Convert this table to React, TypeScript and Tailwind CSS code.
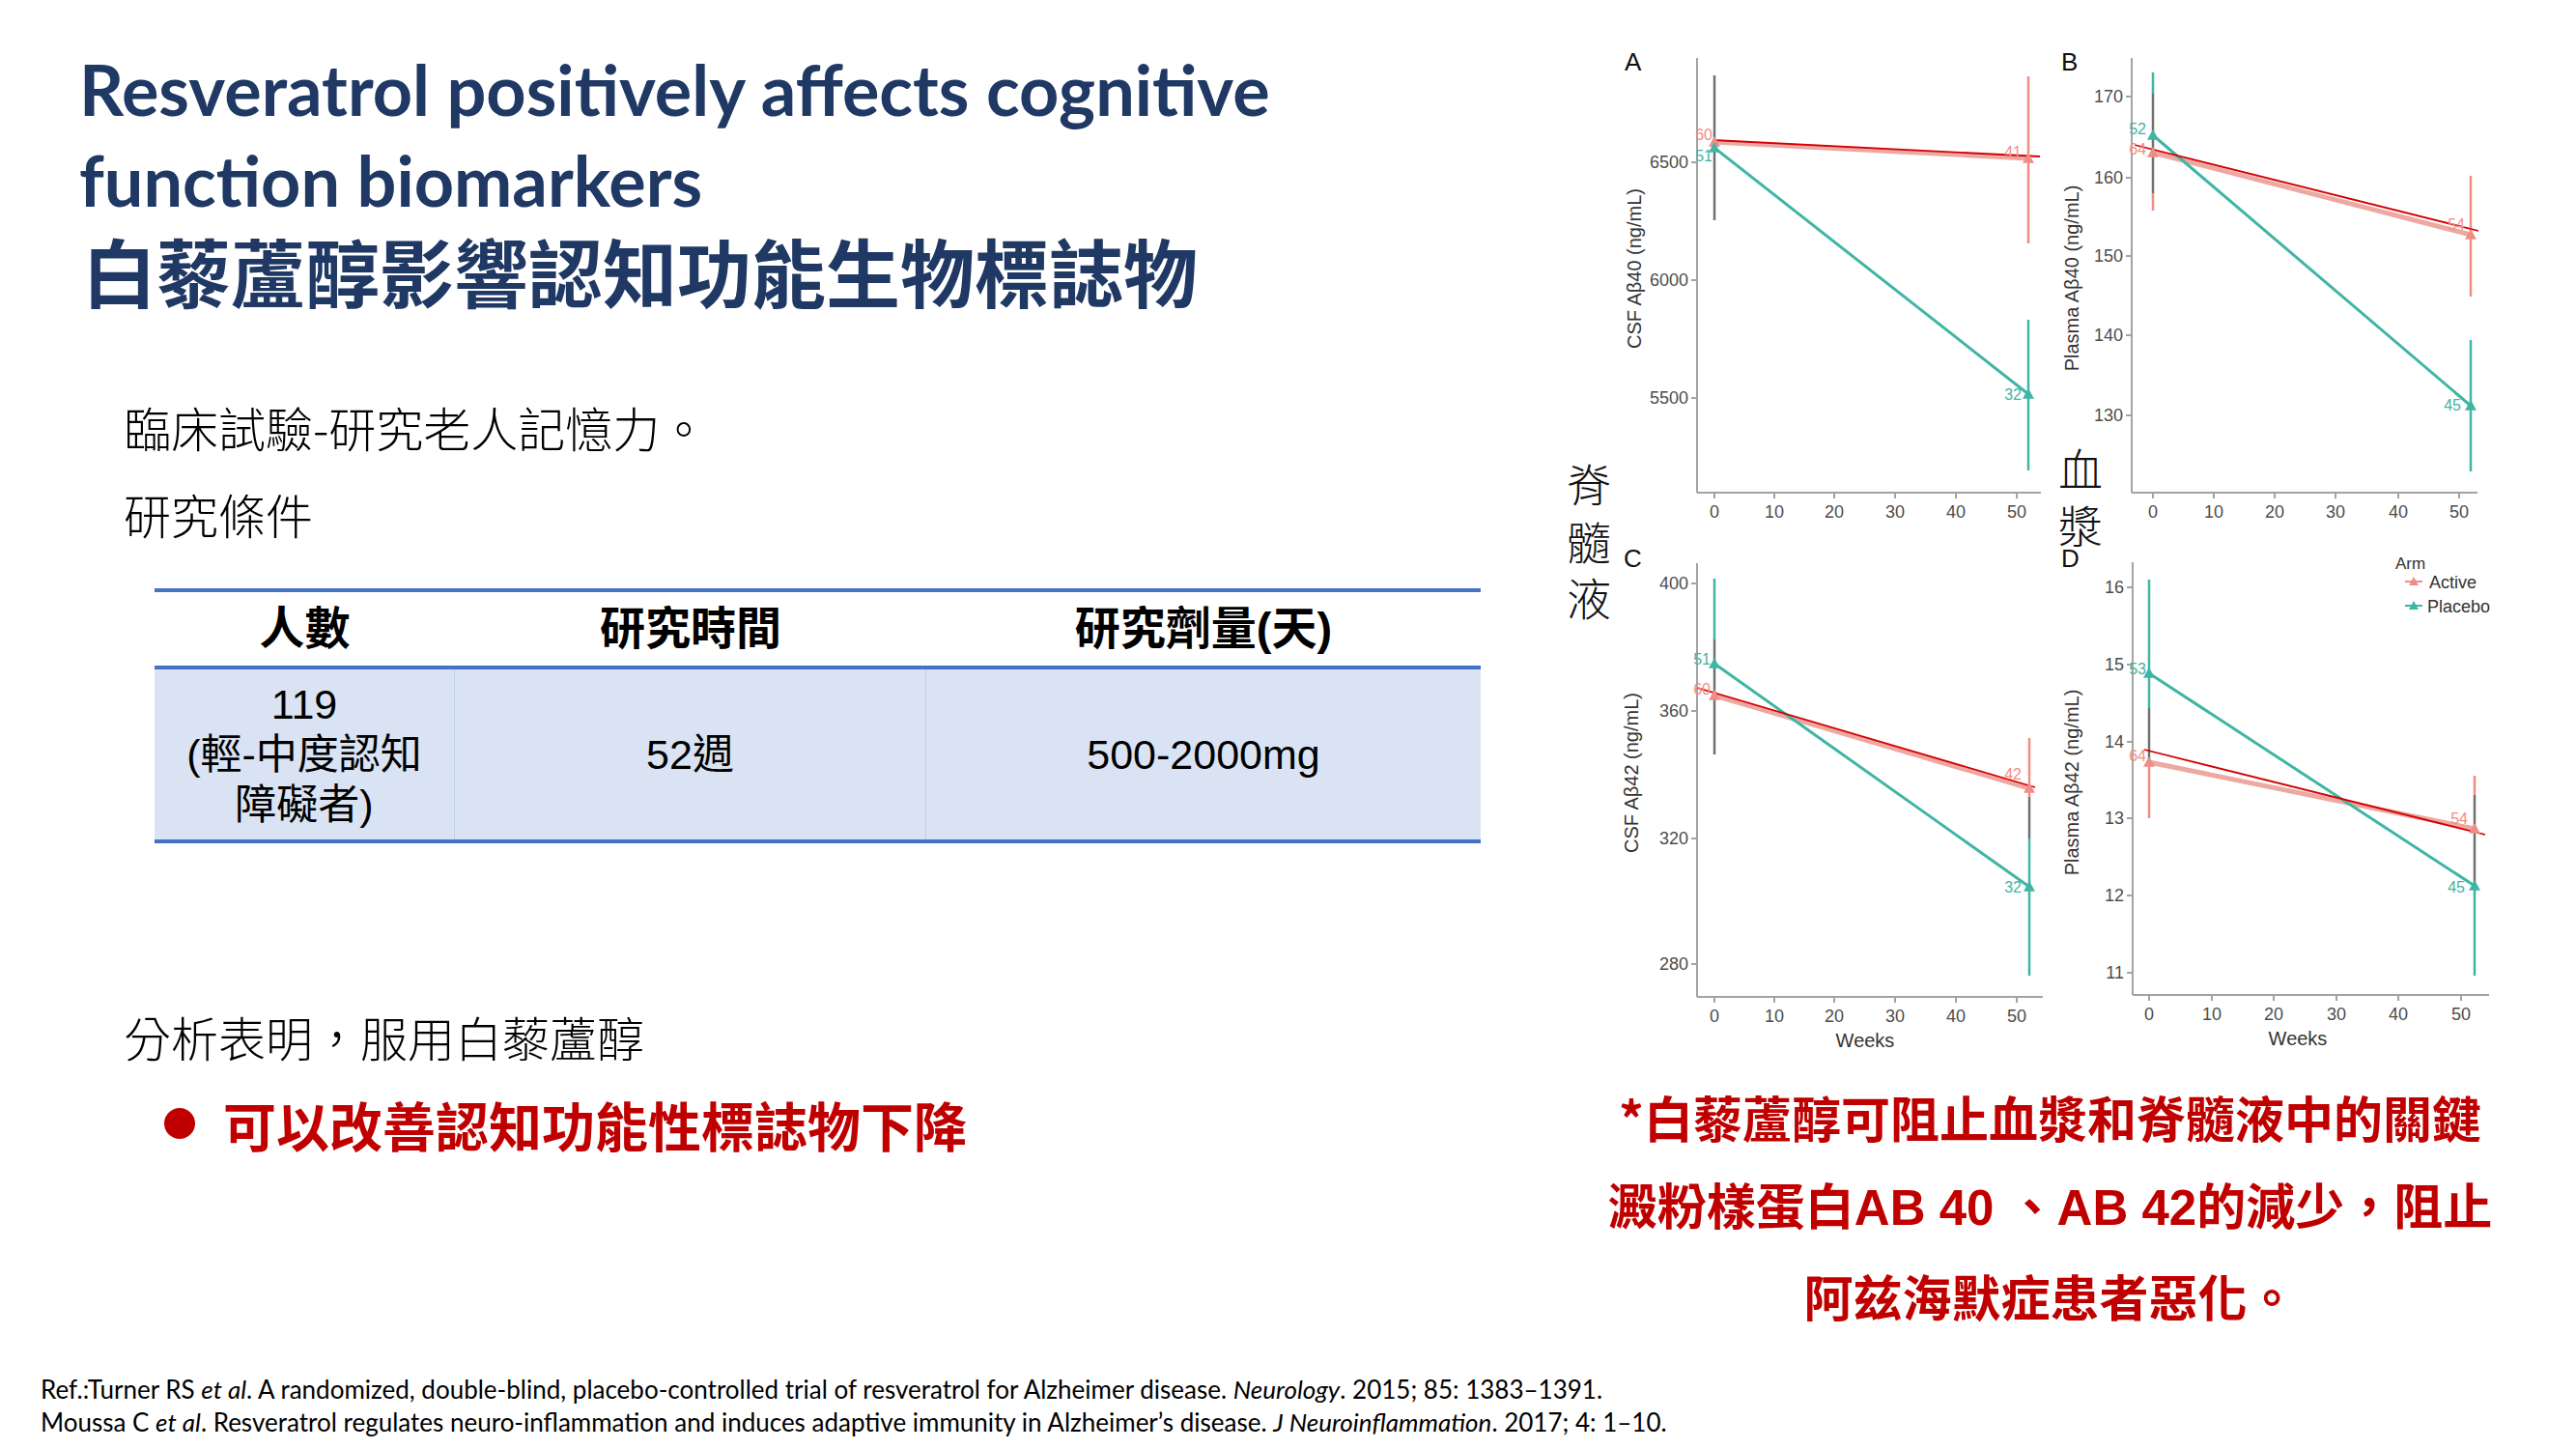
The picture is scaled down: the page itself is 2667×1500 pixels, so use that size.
import React from "react";

const TEAL = "#3fb5a4";
const SALMON = "#ef8e87";
const PINK = "#eda8a2";
const FIT = "#d40000";
const OVER = "#707070";
const AXIS = "#a3a3a3";
const TICK = "#4d4d4d";

type Seg = [number, number, number, number];
type Bar = { x: number; y1: number; y2: number; c: string };
type Lbl = { x: number; y: number; t: string; c: string };

type PanelCfg = {
  ax: number;
  top: number;
  bottom: number;
  right: number;
  xt: number[];
  yt: { y: number; t: string }[];
  letter: { x: number; y: number; t: string };
  title: { x: number; y: number; t: string };
  weeks?: number;
  bars: Bar[];
  active: Seg;
  placebo: Seg;
  fit: Seg;
  labels: Lbl[];
};

const tri = (x: number, y: number, c: string, s = 6) => (
  <polygon points={`${x},${y - s} ${x - s},${y + s * 0.8} ${x + s},${y + s * 0.8}`} fill={c} />
);

const panels: PanelCfg[] = [
  {
    ax: 1757, top: 60, bottom: 510, right: 2113,
    xt: [1775, 1837, 1899, 1962, 2025, 2088],
    yt: [{ y: 168, t: "6500" }, { y: 290, t: "6000" }, { y: 412, t: "5500" }],
    letter: { x: 1682, y: 73, t: "A" },
    title: { x: 1692, y: 278, t: "CSF Aβ40 (ng/mL)" },
    bars: [
      { x: 1775, y1: 78, y2: 228, c: OVER },
      { x: 2100, y1: 79, y2: 252, c: SALMON },
      { x: 2100, y1: 331, y2: 487, c: TEAL },
    ],
    active: [1775, 147, 2100, 164],
    placebo: [1775, 153, 2100, 408],
    fit: [1773, 145, 2112, 162],
    labels: [
      { x: 1773, y: 145, t: "60", c: SALMON },
      { x: 1773, y: 167, t: "51", c: TEAL },
      { x: 2093, y: 163, t: "41", c: SALMON },
      { x: 2093, y: 414, t: "32", c: TEAL },
    ],
  },
  {
    ax: 2207, top: 60, bottom: 510, right: 2565,
    xt: [2229, 2292, 2355, 2418, 2483, 2546],
    yt: [
      { y: 100, t: "170" }, { y: 184, t: "160" }, { y: 265, t: "150" },
      { y: 347, t: "140" }, { y: 430, t: "130" },
    ],
    letter: { x: 2134, y: 73, t: "B" },
    title: { x: 2145, y: 288, t: "Plasma Aβ40 (ng/mL)" },
    bars: [
      { x: 2229, y1: 75, y2: 97, c: TEAL },
      { x: 2229, y1: 97, y2: 200, c: OVER },
      { x: 2229, y1: 200, y2: 218, c: SALMON },
      { x: 2558, y1: 182, y2: 307, c: SALMON },
      { x: 2558, y1: 352, y2: 488, c: TEAL },
    ],
    active: [2229, 158, 2558, 243],
    placebo: [2229, 140, 2558, 420],
    fit: [2210, 150, 2566, 239],
    labels: [
      { x: 2222, y: 139, t: "52", c: TEAL },
      { x: 2222, y: 160, t: "64", c: SALMON },
      { x: 2552, y: 238, t: "54", c: SALMON },
      { x: 2548, y: 425, t: "45", c: TEAL },
    ],
  },
  {
    ax: 1757, top: 583, bottom: 1032, right: 2115,
    xt: [1775, 1837, 1899, 1962, 2025, 2088],
    yt: [{ y: 604, t: "400" }, { y: 736, t: "360" }, { y: 868, t: "320" }, { y: 998, t: "280" }],
    letter: { x: 1681, y: 587, t: "C" },
    title: { x: 1689, y: 800, t: "CSF Aβ42 (ng/mL)" },
    weeks: 1931,
    bars: [
      { x: 1775, y1: 599, y2: 662, c: TEAL },
      { x: 1775, y1: 662, y2: 781, c: OVER },
      { x: 2101, y1: 764, y2: 825, c: SALMON },
      { x: 2101, y1: 825, y2: 868, c: OVER },
      { x: 2101, y1: 868, y2: 1010, c: TEAL },
    ],
    active: [1775, 720, 2101, 816],
    placebo: [1775, 687, 2101, 918],
    fit: [1757, 712, 2107, 815],
    labels: [
      { x: 1771, y: 688, t: "51", c: TEAL },
      { x: 1771, y: 719, t: "60", c: SALMON },
      { x: 2093, y: 807, t: "42", c: SALMON },
      { x: 2093, y: 924, t: "32", c: TEAL },
    ],
  },
  {
    ax: 2208, top: 582, bottom: 1030, right: 2577,
    xt: [2225, 2290, 2354, 2419, 2483, 2548],
    yt: [
      { y: 608, t: "16" }, { y: 688, t: "15" }, { y: 768, t: "14" },
      { y: 847, t: "13" }, { y: 927, t: "12" }, { y: 1007, t: "11" },
    ],
    letter: { x: 2134, y: 587, t: "D" },
    title: { x: 2145, y: 810, t: "Plasma Aβ42 (ng/mL)" },
    weeks: 2379,
    bars: [
      { x: 2225, y1: 600, y2: 733, c: TEAL },
      { x: 2225, y1: 733, y2: 790, c: OVER },
      { x: 2225, y1: 790, y2: 847, c: SALMON },
      { x: 2562, y1: 803, y2: 823, c: SALMON },
      { x: 2562, y1: 823, y2: 917, c: OVER },
      { x: 2562, y1: 917, y2: 1010, c: TEAL },
    ],
    active: [2225, 789, 2562, 858],
    placebo: [2225, 697, 2562, 917],
    fit: [2220, 776, 2573, 864],
    labels: [
      { x: 2222, y: 698, t: "53", c: TEAL },
      { x: 2222, y: 788, t: "64", c: SALMON },
      { x: 2555, y: 853, t: "54", c: SALMON },
      { x: 2552, y: 924, t: "45", c: TEAL },
    ],
  },
];

function Panel({ p }: { p: PanelCfg }) {
  return (
    <g>
      <line x1={p.ax} y1={p.top} x2={p.ax} y2={p.bottom} stroke={AXIS} strokeWidth={2} />
      <line x1={p.ax} y1={p.bottom} x2={p.right} y2={p.bottom} stroke={AXIS} strokeWidth={2} />
      {p.yt.map((t) => (
        <g key={t.t}>
          <line x1={p.ax - 6} y1={t.y} x2={p.ax} y2={t.y} stroke={AXIS} strokeWidth={2} />
          <text x={p.ax - 9} y={t.y + 6} textAnchor="end" fontSize={18} fill={TICK}>
            {t.t}
          </text>
        </g>
      ))}
      {p.xt.map((x, i) => (
        <g key={x}>
          <line x1={x} y1={p.bottom} x2={x} y2={p.bottom + 6} stroke={AXIS} strokeWidth={2} />
          <text x={x} y={p.bottom + 26} textAnchor="middle" fontSize={18} fill={TICK}>
            {i * 10}
          </text>
        </g>
      ))}
      {p.weeks && (
        <text x={p.weeks} y={p.bottom + 52} textAnchor="middle" fontSize={20} fill="#333">
          Weeks
        </text>
      )}
      <text x={p.letter.x} y={p.letter.y} fontSize={26} fill="#111">
        {p.letter.t}
      </text>
      <text
        x={p.title.x}
        y={p.title.y}
        transform={`rotate(-90 ${p.title.x} ${p.title.y})`}
        textAnchor="middle"
        dominantBaseline="central"
        fontSize={20}
        fill="#333"
      >
        {p.title.t}
      </text>
      {p.bars.map((b, i) => (
        <line key={i} x1={b.x} y1={b.y1} x2={b.x} y2={b.y2} stroke={b.c} strokeWidth={2.5} />
      ))}
      <line x1={p.active[0]} y1={p.active[1]} x2={p.active[2]} y2={p.active[3]} stroke={PINK} strokeWidth={5} />
      <line x1={p.placebo[0]} y1={p.placebo[1]} x2={p.placebo[2]} y2={p.placebo[3]} stroke={TEAL} strokeWidth={3} />
      <line x1={p.fit[0]} y1={p.fit[1]} x2={p.fit[2]} y2={p.fit[3]} stroke={FIT} strokeWidth={1.8} />
      {tri(p.active[0], p.active[1], SALMON)}
      {tri(p.active[2], p.active[3], SALMON)}
      {tri(p.placebo[0], p.placebo[1], TEAL)}
      {tri(p.placebo[2], p.placebo[3], TEAL)}
      {p.labels.map((l) => (
        <text key={l.t + l.y} x={l.x} y={l.y} textAnchor="end" fontSize={16} fill={l.c}>
          {l.t}
        </text>
      ))}
    </g>
  );
}

function Charts() {
  return (
    <svg
      width={1067}
      height={1100}
      viewBox="1600 0 1067 1100"
      className="block font-['Liberation_Sans',Arial,sans-serif]"
    >
      {panels.map((p) => (
        <Panel key={p.letter.t} p={p} />
      ))}
      <g fontSize={17} fill="#333">
        <text x={2480} y={589}>Arm</text>
        <line x1={2490} y1={602} x2={2508} y2={602} stroke={SALMON} strokeWidth={2} />
        {tri(2499, 602, SALMON, 5)}
        <text x={2515} y={609} fontSize={18}>Active</text>
        <line x1={2490} y1={627} x2={2508} y2={627} stroke={TEAL} strokeWidth={2} />
        {tri(2499, 627, TEAL, 5)}
        <text x={2513} y={634} fontSize={18}>Placebo</text>
      </g>
      <g
        className="font-['Noto_Sans_CJK_TC',sans-serif]"
        fontSize={46}
        fontWeight={300}
        fill="#111"
        textAnchor="middle"
        dominantBaseline="central"
      >
        <text x={1645} y={499}>脊</text>
        <text x={1645} y={559}>髓</text>
        <text x={1645} y={617}>液</text>
        <text x={2154} y={483}>血</text>
        <text x={2154} y={542}>漿</text>
      </g>
    </svg>
  );
}

export default function App() {
  const cjk = "font-['Noto_Sans_CJK_TC',sans-serif]";
  const tableCols = "grid grid-cols-[311px_488px_574px]";
  return (
    <div className="flex h-[1500px] w-[2667px] flex-col overflow-hidden bg-white text-black">
      <div className="flex flex-1">
        <div className="flex w-[1600px] flex-col pl-[82px] pt-[45px]">
          <h1 className="font-['Lato',sans-serif] text-[72px] font-bold leading-[94px] text-[#1f3864]">
            Resveratrol positively affects cognitive
            <br />
            function biomarkers
          </h1>
          <h2 className={`${cjk} pl-[3px] text-[77px] font-bold leading-[94px] text-[#1f3864]`}>
            白藜蘆醇影響認知功能生物標誌物
          </h2>

          <div className={`${cjk} mt-[70px] pl-[46px] text-[49px] font-light leading-[90px]`}>
            <p>臨床試驗-研究老人記憶力。</p>
            <p>研究條件</p>
          </div>

          <div className="ml-[78px] mt-[32px] w-[1373px] border-y-4 border-[#4472c4] font-['Liberation_Sans','Noto_Sans_CJK_TC',sans-serif]">
            <div className={`${tableCols} h-[76px] items-center text-center text-[47px] font-bold`}>
              <div>人數</div>
              <div>研究時間</div>
              <div>研究劑量(天)</div>
            </div>
            <div className={`${tableCols} h-[180px] border-t-4 border-[#4472c4] bg-[#dae3f3] text-[43px] leading-[52px]`}>
              <div className="flex items-center justify-center border-r border-[#c4cee4] text-center">
                119
                <br />
                (輕-中度認知
                <br />
                障礙者)
              </div>
              <div className="flex items-center justify-center border-r border-[#c4cee4]">52週</div>
              <div className="flex items-center justify-center">500-2000mg</div>
            </div>
          </div>

          <p className={`${cjk} mt-[155px] pl-[46px] text-[49px] font-light leading-[90px]`}>
            分析表明，服用白藜蘆醇
          </p>
          <div className="ml-[88px] flex items-center gap-[29px]">
            <span className="h-[32px] w-[32px] rounded-full bg-[#c00000]" />
            <span className={`${cjk} text-[55px] font-bold leading-[90px] text-[#c00000]`}>
              可以改善認知功能性標誌物下降
            </span>
          </div>
        </div>

        <div className="flex w-[1067px] flex-col">
          <Charts />
          <p className={`${cjk} mt-[11px] pr-[22px] text-center text-[51px] font-bold leading-[90px] text-[#c00000]`}>
            *白藜蘆醇可阻止血漿和脊髓液中的關鍵
            <br />
            澱粉樣蛋白<span className="font-['Liberation_Sans',sans-serif]">AB 40 </span>、
            <span className="font-['Liberation_Sans',sans-serif]">AB 42</span>的減少，阻止
            <br />
            阿兹海默症患者惡化。
          </p>
        </div>
      </div>

      <div className="pb-[11px] pl-[42px] font-['Lato',sans-serif] text-[26px] leading-[34px]">
        <p>
          Ref.:Turner RS <i>et al</i>. A randomized, double-blind, placebo-controlled trial of resveratrol for
          Alzheimer disease. <i>Neurology</i>. 2015; 85: 1383–1391.
        </p>
        <p>
          Moussa C <i>et al</i>. Resveratrol regulates neuro-inflammation and induces adaptive immunity in
          Alzheimer’s disease. <i>J Neuroinflammation</i>. 2017; 4: 1–10.
        </p>
      </div>
    </div>
  );
}
